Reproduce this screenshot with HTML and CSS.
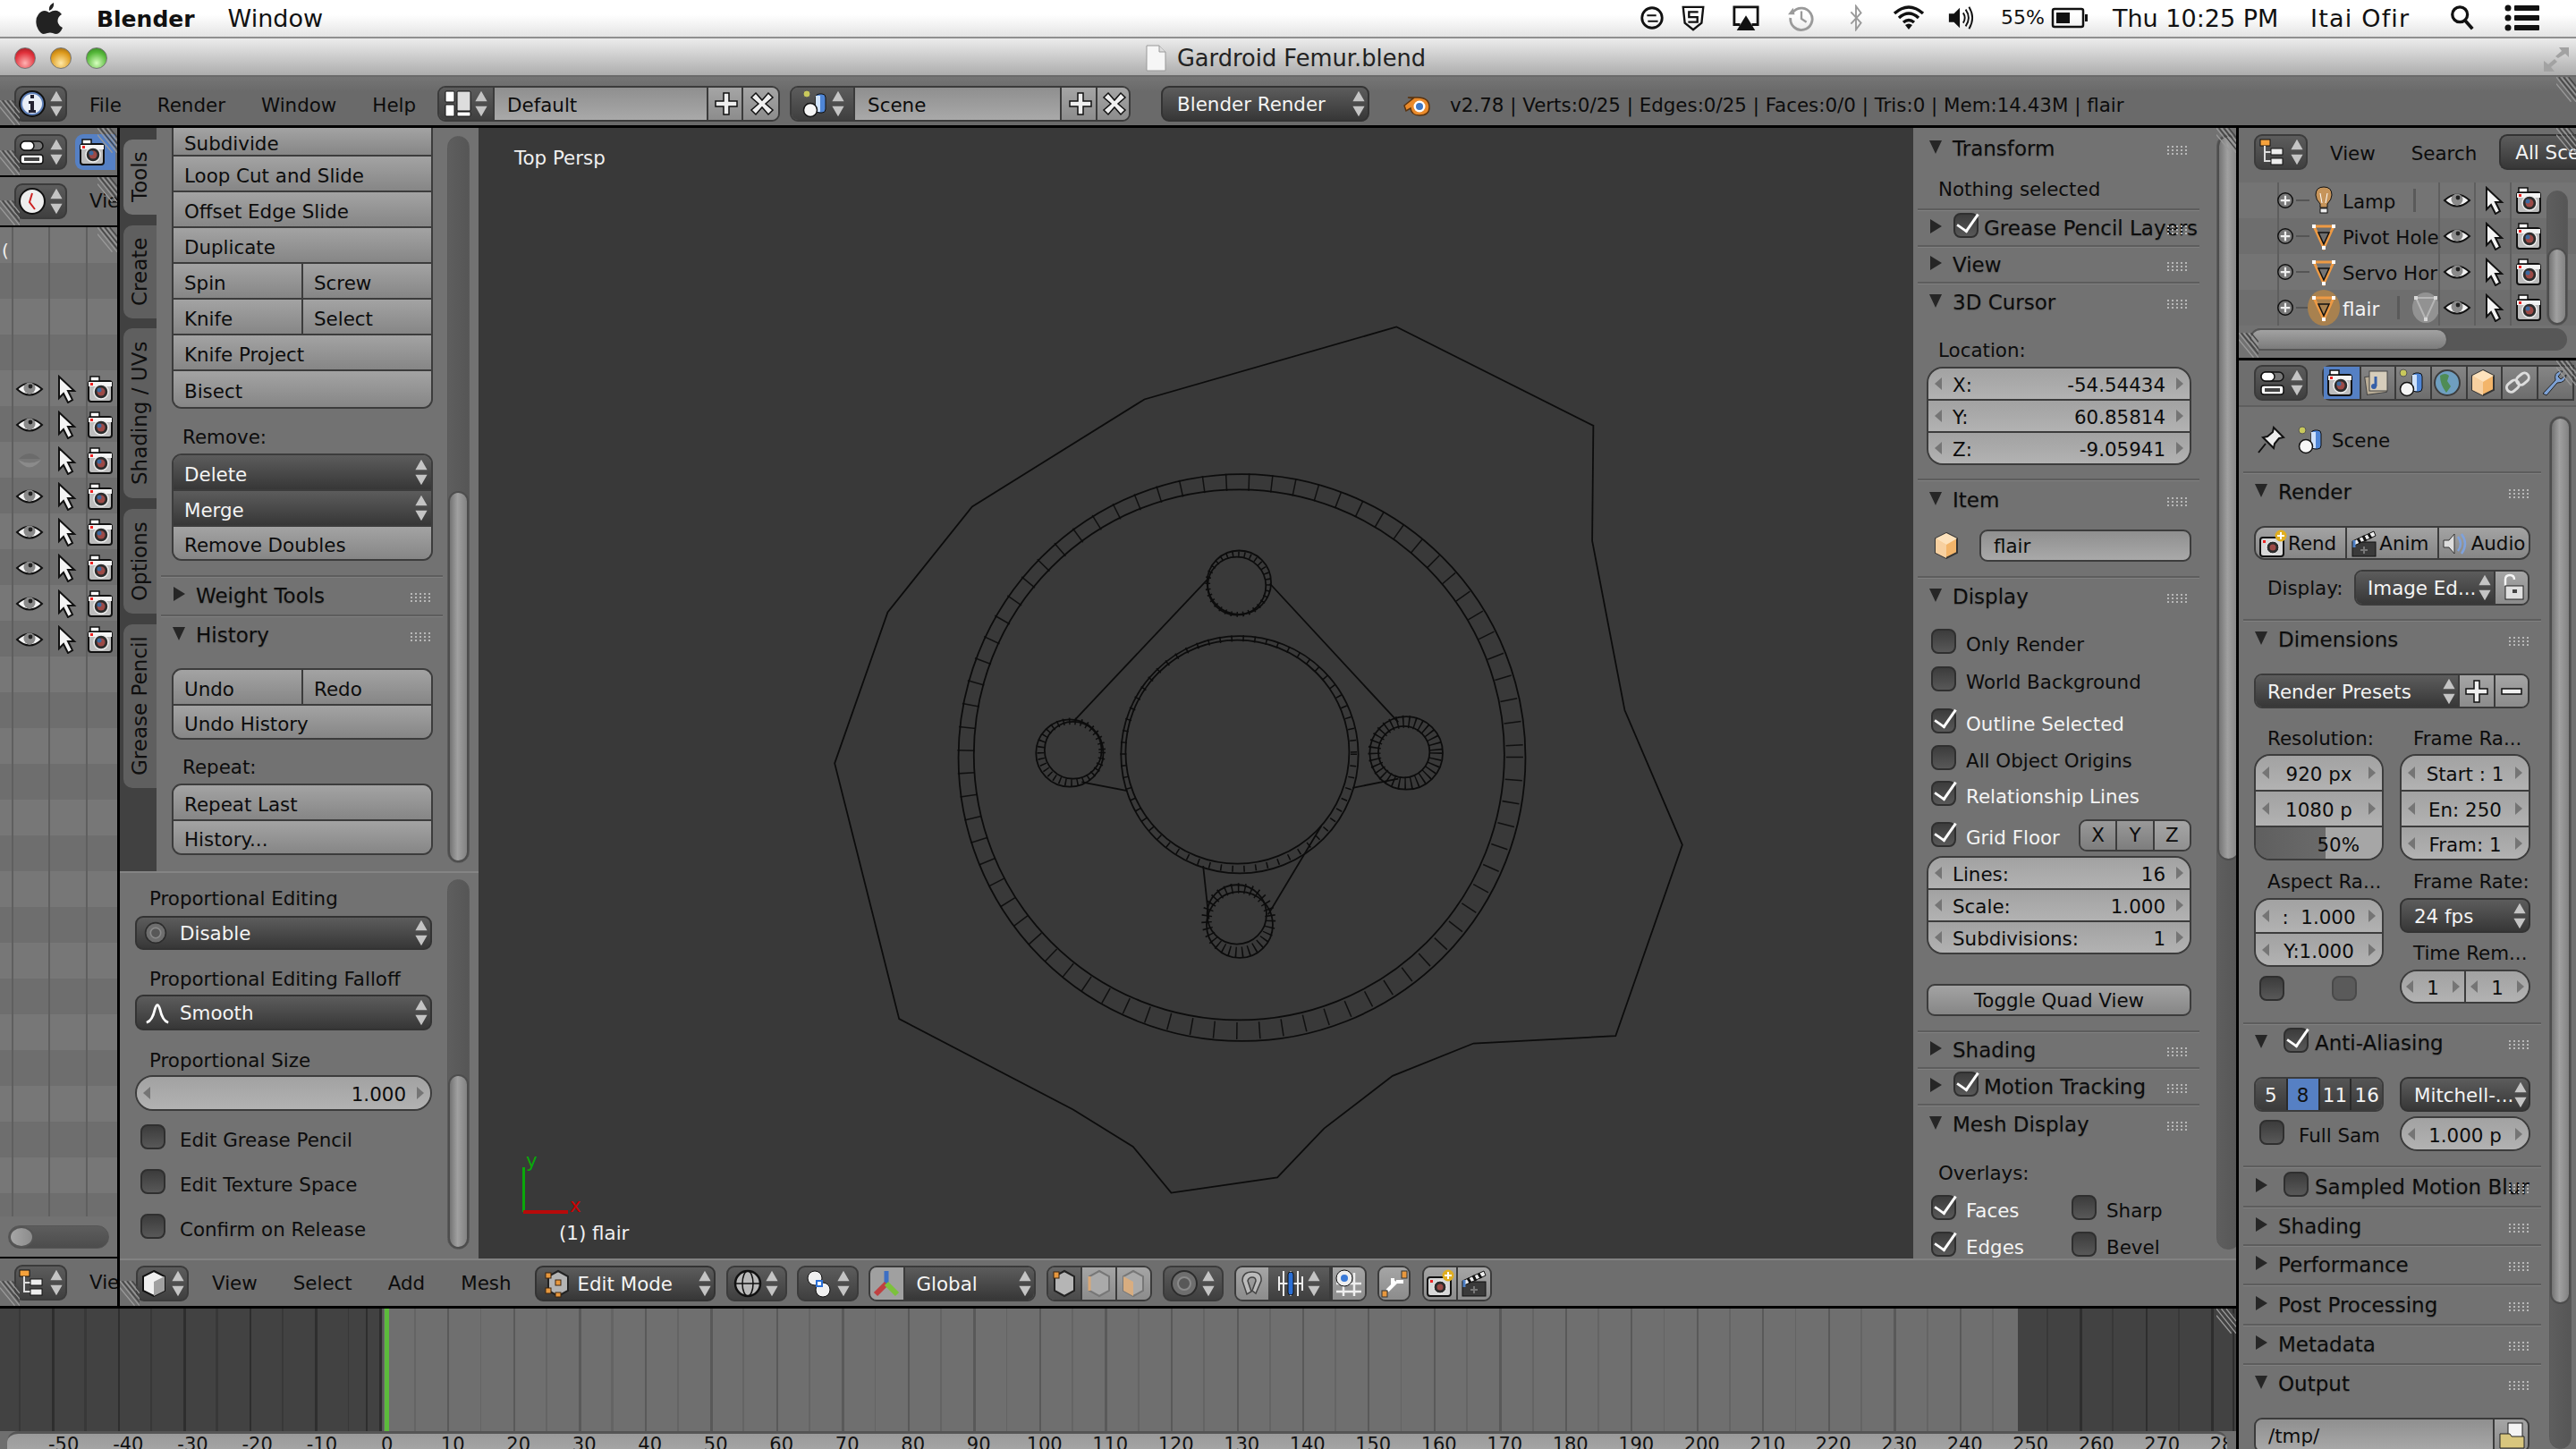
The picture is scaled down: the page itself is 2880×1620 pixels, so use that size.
FILE: index.html
```html
<!DOCTYPE html>
<html lang="en">
<head>
<meta charset="utf-8">
<title>Gardroid Femur.blend</title>
<link rel="stylesheet" href="styles.css">
</head>
<body>
<svg class="sprite" xmlns="http://www.w3.org/2000/svg">
<symbol id="eye" viewBox="0 0 32 32"><path d="M2 16Q16 3 30 16Q16 29 2 16Z" fill="#f2f2f2" stroke="#111" stroke-width="2"/><circle cx="16" cy="15" r="6.5" fill="#8a8a8a"/><circle cx="17" cy="13" r="2.4" fill="#222"/></symbol>
<symbol id="eyeoff" viewBox="0 0 32 32"><path d="M3 15Q16 32 29 15Q16 22 3 15Z" fill="#8b8b8b"/><path d="M4 14Q16 2 28 14" fill="#6b6b6b"/></symbol>
<symbol id="cursor" viewBox="0 0 32 32"><path d="M9 2V26L14 21L19 31L24 28L19 18H26Z" fill="#f4f4f4" stroke="#111" stroke-width="2"/></symbol>
<symbol id="cam" viewBox="0 0 32 32"><rect x="3" y="7" width="26" height="23" rx="3" fill="#bdbdbd" stroke="#111" stroke-width="2"/><rect x="5" y="2" width="10" height="5" fill="#fff" stroke="#111" stroke-width="1.5"/><rect x="3" y="8" width="26" height="5" fill="#f4f4f4"/><circle cx="17" cy="19" r="8" fill="#2c2c2c" stroke="#eee" stroke-width="1.5"/><circle cx="17" cy="19" r="4.5" fill="#9c4a46"/><circle cx="15" cy="17" r="2.5" fill="#3d6aa0"/><rect x="5" y="9" width="3" height="3" fill="#e22"/></symbol>
<symbol id="ud" viewBox="0 0 16 36"><path d="M8 3L1 15H15ZM1 21H15L8 33Z" fill="#c4c4c4"/></symbol>
<symbol id="info" viewBox="0 0 32 32"><circle cx="16" cy="16" r="14" fill="#5d7fb8" stroke="#111" stroke-width="2"/><circle cx="16" cy="16" r="11" fill="#e8eef8"/><rect x="14" y="6" width="4" height="4" fill="#223"/><path d="M12 13H18V23H20V26H12V23H14V16H12Z" fill="#223"/></symbol>
<symbol id="layout" viewBox="0 0 32 32"><rect x="2" y="2" width="10" height="12" rx="1" fill="#fff" stroke="#111"/><rect x="2" y="17" width="10" height="13" rx="1" fill="#fff" stroke="#111"/><rect x="15" y="2" width="15" height="22" rx="1" fill="#ddd" stroke="#111"/><rect x="15" y="25" width="15" height="5" rx="1" fill="#fff" stroke="#111"/></symbol>
<symbol id="scene" viewBox="0 0 32 32"><circle cx="7" cy="5" r="4" fill="#c8c85c" stroke="#555"/><rect x="17" y="5" width="11" height="21" rx="4" fill="#4f86d6" stroke="#111"/><rect x="17" y="7" width="5" height="18" fill="#cfe2fb"/><circle cx="11" cy="23" r="7.5" fill="#f6f6f6" stroke="#111" stroke-width="1.5"/></symbol>
<symbol id="plus" viewBox="0 0 32 32"><path d="M13 4H19V13H28V19H19V28H13V19H4V13H13Z" fill="#efefef" stroke="#111" stroke-width="1.5"/></symbol>
<symbol id="minus" viewBox="0 0 32 32"><rect x="5" y="13" width="22" height="6" fill="#efefef" stroke="#111" stroke-width="1.5"/></symbol>
<symbol id="cross" viewBox="0 0 32 32"><path d="M9 4L16 12L23 4L28 9L20 16L28 23L23 28L16 20L9 28L4 23L12 16L4 9Z" fill="#efefef" stroke="#111" stroke-width="1.5"/></symbol>
<symbol id="props" viewBox="0 0 32 32"><rect x="3" y="4" width="25" height="10" rx="5" fill="#777" stroke="#111" stroke-width="1.5"/><rect x="3" y="4" width="15" height="10" rx="5" fill="#fff" stroke="#111" stroke-width="1.5"/><rect x="3" y="19" width="25" height="10" rx="3" fill="#fff" stroke="#111" stroke-width="1.5"/><rect x="7" y="22" width="17" height="4" fill="#444"/></symbol>
<symbol id="clock" viewBox="0 0 32 32"><circle cx="16" cy="16" r="14" fill="#eee" stroke="#111" stroke-width="2"/><path d="M16 7L13 17L19 25" fill="none" stroke="#c22" stroke-width="2"/></symbol>
<symbol id="tree" viewBox="0 0 32 32"><rect x="2" y="2" width="11" height="7" fill="#f6a23c" stroke="#111"/><path d="M7 9V26H14M7 16H14" stroke="#ddd" stroke-width="2" fill="none"/><rect x="14" y="12" width="13" height="7" fill="#eee" stroke="#111"/><rect x="14" y="23" width="13" height="7" fill="#eee" stroke="#111"/></symbol>
<symbol id="cube" viewBox="0 0 32 32"><path d="M16 2L28 8V24L16 30L4 24V8Z" fill="#f0f0f0" stroke="#111" stroke-width="2"/><path d="M16 14L28 8V24L16 30Z" fill="#a0a0a0"/></symbol>
<symbol id="ocube" viewBox="0 0 32 32"><path d="M16 2L28 8V24L16 30L4 24V8Z" fill="#f3b56a" stroke="#333" stroke-width="2"/><path d="M16 15L4 8V24L16 30Z" fill="#f7d0a0"/><path d="M16 15L28 8L16 2L4 8Z" fill="#fde2bc"/></symbol>
<symbol id="blogo" viewBox="0 0 32 32"><path d="M2 18L12 10L6 9H17Q30 9 30 20Q30 29 19 29Q10 29 9 21L4 24Z" fill="#ea8a2a" stroke="#5a3410" stroke-width="1.5"/><circle cx="19" cy="19" r="6.5" fill="#fff"/><circle cx="19" cy="19" r="4" fill="#3f78c4"/></symbol>
<symbol id="editm" viewBox="0 0 32 32"><path d="M16 2L27 8V24L16 30L5 24V8Z" fill="#b4b4b4" stroke="#222" stroke-width="2"/><g fill="#e8983e" stroke="#3a2510"><rect x="2" y="4" width="6" height="6"/><rect x="13" y="12" width="6" height="6"/><rect x="2" y="21" width="6" height="6"/><rect x="13" y="26" width="6" height="5"/></g></symbol>
<symbol id="sphere" viewBox="0 0 32 32"><circle cx="16" cy="16" r="14" fill="#bbb" stroke="#111" stroke-width="2.5"/><ellipse cx="16" cy="16" rx="6" ry="14" fill="none" stroke="#111" stroke-width="1.5"/><path d="M2 16H30" stroke="#111" stroke-width="1.5"/></symbol>
<symbol id="pivot" viewBox="0 0 32 32"><circle cx="11" cy="10" r="8" fill="#f0f0f0" stroke="#111"/><circle cx="20" cy="23" r="8" fill="#f0f0f0" stroke="#111"/><rect x="13" y="13" width="6" height="6" fill="#fff" stroke="#2a6fd6" stroke-width="2"/></symbol>
<symbol id="manip" viewBox="0 0 32 32"><path d="M16 16V2" stroke="#3c6fc4" stroke-width="5"/><path d="M16 16L4 28" stroke="#c04040" stroke-width="6"/><path d="M16 16L28 28" stroke="#7cc13c" stroke-width="6"/></symbol>
<symbol id="vert" viewBox="0 0 32 32"><path d="M16 2L27 8V24L16 30L5 24V8Z" fill="#b5b5b5" stroke="#222" stroke-width="2"/><rect x="4" y="3" width="6" height="7" fill="#e8983e" stroke="#3a2510"/></symbol>
<symbol id="edge" viewBox="0 0 32 32"><path d="M16 2L27 8V24L16 30L5 24V8Z" fill="#aaa" stroke="#777" stroke-width="2"/><path d="M5 8V24" stroke="#d8a878" stroke-width="3"/></symbol>
<symbol id="face" viewBox="0 0 32 32"><path d="M16 2L27 8V24L16 30L5 24V8Z" fill="#aaa" stroke="#777" stroke-width="2"/><path d="M16 14L5 8V24L16 30Z" fill="#d8ad80"/></symbol>
<symbol id="disc" viewBox="0 0 32 32"><circle cx="16" cy="16" r="14" fill="#6e6e6e" stroke="#2c2c2c" stroke-width="2"/><circle cx="16" cy="16" r="7" fill="#585858" stroke="#8a8a8a" stroke-width="2"/></symbol>
<symbol id="smooth" viewBox="0 0 32 32"><path d="M3 28Q10 26 13 12Q16 2 19 12Q22 26 29 28" fill="none" stroke="#fff" stroke-width="3"/></symbol>
<symbol id="magnet" viewBox="0 0 32 32"><path d="M10 28L5 13Q5 3 16 3Q27 3 26 13L20 27L16 24L20 13Q20 9 16 9Q12 9 11 13L15 25Z" fill="#bbb" stroke="#444" stroke-width="1.5"/></symbol>
<symbol id="snap" viewBox="0 0 32 32"><path d="M3 8V24M8 2V30M3 16H29M16 2V30M24 2V30M29 8V24" stroke="#eee" stroke-width="2" fill="none"/><rect x="13" y="3" width="6" height="26" rx="3" fill="#2a6fd6" stroke="#111"/></symbol>
<symbol id="grid" viewBox="0 0 32 32"><path d="M22 4V30M30 16H2M30 25H2M10 16V30" stroke="#eee" stroke-width="2.5" fill="none"/><circle cx="11" cy="10" r="9" fill="#eee" stroke="#111"/><circle cx="11" cy="10" r="4" fill="#3a7ad8"/></symbol>
<symbol id="snapt" viewBox="0 0 32 32"><path d="M18 14L8 24M14 18V10M18 14H26" stroke="#fff" stroke-width="4" fill="none"/><rect x="24" y="2" width="6" height="8" fill="#e8983e" stroke="#333"/><rect x="2" y="24" width="6" height="7" fill="#e8983e" stroke="#333"/></symbol>
<symbol id="rcam" viewBox="0 0 32 32"><rect x="2" y="9" width="26" height="21" rx="3" fill="#d8d8d8" stroke="#111" stroke-width="2"/><circle cx="16" cy="20" r="7" fill="#2c2c2c" stroke="#fff"/><circle cx="16" cy="20" r="3.5" fill="#9c4a46"/><circle cx="25" cy="7" r="6.5" fill="#e0ae1f"/><path d="M25 3V11M21 7H29" stroke="#fff" stroke-width="2"/><rect x="5" y="12" width="3" height="3" fill="#e22"/></symbol>
<symbol id="clap" viewBox="0 0 32 32"><rect x="3" y="14" width="26" height="16" fill="#3a3a3a" stroke="#111"/><path d="M3 13L27 2L29 7L5 18Z" fill="#eee" stroke="#111"/><path d="M9 10L12 15M15 7L18 13M21 5L24 10" stroke="#111" stroke-width="3"/><path d="M5 12V20" stroke="#4d80c8" stroke-width="3"/><path d="M16 19V27M12 23H20" stroke="#777" stroke-width="2"/></symbol>
<symbol id="audio" viewBox="0 0 32 32"><path d="M2 12H8L14 5V27L8 20H2Z" fill="#ddd" stroke="#333"/><path d="M18 8Q24 16 18 24M22 5Q30 16 22 27" fill="none" stroke="#7fa2dc" stroke-width="2.5"/></symbol>
<symbol id="lock" viewBox="0 0 32 32"><path d="M9 14V7Q9 2 14 2Q19 2 19 7" fill="none" stroke="#f4f4f4" stroke-width="2.5"/><rect x="9" y="14" width="20" height="15" fill="#e0e0e0" stroke="#222"/><rect x="17" y="18" width="5" height="4" fill="#444"/></symbol>
<symbol id="pin" viewBox="0 0 32 32"><path d="M19 2L30 13L25 14L20 20L19 25L7 13L12 12L18 7ZM10 20L2 30" fill="#eee" stroke="#111" stroke-width="2"/></symbol>
<symbol id="bulb" viewBox="0 0 32 32"><path d="M16 1Q7 1 7 10Q7 15 12 20V24H20V20Q25 15 25 10Q25 1 16 1Z" fill="#c6945a" stroke="#111"/><rect x="12" y="25" width="8" height="5" fill="#eee" stroke="#111"/><path d="M14 19L12 8M18 19L20 8" stroke="#fff"/></symbol>
<symbol id="mesh" viewBox="0 0 32 32"><path d="M5 5H27L16 29Z" fill="none" stroke="#ee9a44" stroke-width="3"/><g fill="#fff"><rect x="3" y="3" width="4" height="4"/><rect x="25" y="3" width="4" height="4"/><rect x="14" y="27" width="4" height="4"/></g><path d="M10 12H22L16 25Z" fill="none" stroke="#111" stroke-width="1.5"/></symbol>
<symbol id="gmesh" viewBox="0 0 32 32"><path d="M5 5H27L16 29Z" fill="none" stroke="#b5b5b5" stroke-width="2"/><g fill="#d8d8d8"><rect x="3" y="3" width="4" height="4"/><rect x="25" y="3" width="4" height="4"/><rect x="14" y="27" width="4" height="4"/></g></symbol>
<symbol id="expand" viewBox="0 0 32 32"><circle cx="16" cy="16" r="11" fill="#777" stroke="#111" stroke-width="2"/><path d="M16 9V23M9 16H23" stroke="#eee" stroke-width="3"/></symbol>
<symbol id="layers" viewBox="0 0 32 32"><rect x="4" y="8" width="22" height="20" fill="#b9ad96" stroke="#444" transform="rotate(-8 15 18)"/><rect x="8" y="3" width="20" height="22" fill="#d6cdbb" stroke="#444"/><path d="M15 9V20" stroke="#355fa8" stroke-width="3"/><circle cx="13" cy="20" r="3" fill="#355fa8"/></symbol>
<symbol id="world" viewBox="0 0 32 32"><circle cx="16" cy="16" r="14" fill="#6f9fc0" stroke="#3c3c3c" stroke-width="2"/><path d="M8 8Q14 4 18 8L16 14L20 20L15 27Q8 18 8 8Z" fill="#4f8c55"/></symbol>
<symbol id="link" viewBox="0 0 32 32"><g fill="none" stroke="#ddd" stroke-width="3"><rect x="3" y="15" width="15" height="10" rx="5" transform="rotate(-40 10 20)"/><rect x="14" y="7" width="15" height="10" rx="5" transform="rotate(-40 21 12)"/></g></symbol>
<symbol id="wrench" viewBox="0 0 32 32"><path d="M4 28L18 13Q16 5 23 3L26 3L21 9L24 12L30 7Q30 16 20 16L8 30Z" fill="#7ea2d6" stroke="#222"/></symbol>
<symbol id="folder" viewBox="0 0 32 32"><rect x="12" y="2" width="16" height="17" fill="#f4f4f4" stroke="#222"/><path d="M3 14H14L16 17H30V30H3Z" fill="#d8c67e" stroke="#222"/></symbol>
<symbol id="triD" viewBox="0 0 16 18"><path d="M1 2H15L8 17Z" fill="#262626"/></symbol>
<symbol id="triR" viewBox="0 0 16 18"><path d="M2 1V17L15 9Z" fill="#262626"/></symbol>
<symbol id="grip" viewBox="0 0 24 10"><g fill="#b8b8b8"><rect x="0" y="0" width="2" height="2"/><rect x="5" y="0" width="2" height="2"/><rect x="10" y="0" width="2" height="2"/><rect x="15" y="0" width="2" height="2"/><rect x="20" y="0" width="2" height="2"/><rect x="0" y="4" width="2" height="2"/><rect x="5" y="4" width="2" height="2"/><rect x="10" y="4" width="2" height="2"/><rect x="15" y="4" width="2" height="2"/><rect x="20" y="4" width="2" height="2"/><rect x="0" y="8" width="2" height="2"/><rect x="5" y="8" width="2" height="2"/><rect x="10" y="8" width="2" height="2"/><rect x="15" y="8" width="2" height="2"/><rect x="20" y="8" width="2" height="2"/></g></symbol>
<symbol id="hatch" viewBox="0 0 24 30"><path d="M0 0L24 30M6 0L24 22M12 0L24 15M0 8L18 30" stroke="#999" stroke-width="1.5"/><path d="M3 0L24 26M9 0L24 19M15 0L24 11" stroke="#444" stroke-width="1.5"/></symbol>
<symbol id="apple" viewBox="0 0 30 36"><path d="M20 0Q21 6 15 9Q14 3 20 0ZM15 11Q20 8 24 9Q27 10 29 13Q23 17 25 23Q26 26 30 28Q27 35 23 35Q21 35 19 34Q16 33 13 34Q10 35 8 35Q4 34 1 26Q-1 18 3 13Q6 9 10 9Q12 9 15 11Z" fill="#222"/></symbol>
<symbol id="sync" viewBox="0 0 32 32"><circle cx="16" cy="16" r="12" fill="none" stroke="#111" stroke-width="3"/><path d="M11 9H23V14H11ZM9 18H21V23H9Z" fill="#fff"/><path d="M10 13H21M11 20H23" stroke="#111" stroke-width="2"/></symbol>
<symbol id="shield" viewBox="0 0 32 32"><path d="M4 3H28L26 22L16 30L6 22Z" fill="none" stroke="#111" stroke-width="2.5"/><path d="M22 9H11V15H21V21H10" fill="none" stroke="#111" stroke-width="2.5"/></symbol>
<symbol id="airplay" viewBox="0 0 32 32"><path d="M9 24H2V3H30V24H23" fill="none" stroke="#111" stroke-width="3"/><path d="M16 13L27 31H5Z" fill="#111"/></symbol>
<symbol id="time" viewBox="0 0 32 32"><path d="M6 9A13 13 0 1 1 3 16" fill="none" stroke="#9a9a9a" stroke-width="3"/><path d="M0 12H8L6 4Z" fill="#9a9a9a"/><path d="M16 8V17L22 21" fill="none" stroke="#9a9a9a" stroke-width="2.5"/></symbol>
<symbol id="bt" viewBox="0 0 16 32"><path d="M2 9L14 22L8 30V2L14 10L2 23" fill="none" stroke="#9a9a9a" stroke-width="2"/></symbol>
<symbol id="wifi" viewBox="0 0 36 30"><path d="M2 10Q18 -4 34 10M7 15Q18 5 29 15M12 20Q18 15 24 20" fill="none" stroke="#111" stroke-width="3.5"/><path d="M18 28L14 23Q18 20 22 23Z" fill="#111"/></symbol>
<symbol id="vol" viewBox="0 0 32 32"><path d="M2 11H8L15 4V28L8 21H2Z" fill="#111"/><path d="M19 10Q23 16 19 22M22 6Q29 16 22 26M26 3Q34 16 26 29" fill="none" stroke="#111" stroke-width="2"/></symbol>
<symbol id="batt" viewBox="0 0 42 24"><rect x="2" y="2" width="34" height="20" rx="2" fill="none" stroke="#111" stroke-width="2.5"/><rect x="6" y="6" width="15" height="12" fill="#111"/><rect x="38" y="8" width="3" height="8" fill="#111"/></symbol>
<symbol id="search" viewBox="0 0 32 32"><circle cx="13" cy="12" r="9" fill="none" stroke="#111" stroke-width="3.5"/><path d="M19 19L28 29" stroke="#111" stroke-width="4"/></symbol>
<symbol id="list" viewBox="0 0 40 32"><g fill="#111"><circle cx="4" cy="5" r="3.5"/><circle cx="4" cy="16" r="3.5"/><circle cx="4" cy="27" r="3.5"/><rect x="11" y="2" width="28" height="6" rx="1"/><rect x="11" y="13" width="28" height="6" rx="1"/><rect x="11" y="24" width="28" height="6" rx="1"/></g></symbol>
<symbol id="doc" viewBox="0 0 24 30"><path d="M2 1H16L23 8V29H2Z" fill="#f6f6f6" stroke="#999"/><path d="M16 1V8H23" fill="#ddd" stroke="#999"/></symbol>
<symbol id="full" viewBox="0 0 30 30"><path d="M18 2H29V13L25 9L17 14L14 12L21 6ZM1 17L6 21L13 15L16 18L9 24L13 29H1Z" fill="#a2a2a2"/></symbol>
</svg>

<div class="app">
  <header class="macbar">
    <svg class="apple"><use href="#apple"/></svg>
    <span class="mac-b">Blender</span>
    <span class="mac-m">Window</span>
    <span class="mac-right">
      <svg class="mi"><use href="#sync"/></svg>
      <svg class="mi g1"><use href="#shield"/></svg>
      <svg class="mi g2"><use href="#airplay"/></svg>
      <svg class="mi g3"><use href="#time"/></svg>
      <svg class="mi-bt"><use href="#bt"/></svg>
      <svg class="mi-wifi"><use href="#wifi"/></svg>
      <svg class="mi g4"><use href="#vol"/></svg>
      <span class="mac-pct">55%</span>
      <svg class="mi-batt"><use href="#batt"/></svg>
      <span class="mac-clock">Thu 10:25 PM</span>
      <span class="mac-user">Itai Ofir</span>
      <svg class="mi-search"><use href="#search"/></svg>
      <svg class="mi-list"><use href="#list"/></svg>
    </span>
  </header>

  <div class="titlebar">
    <span class="lights"><i class="light red"></i><i class="light amber"></i><i class="light green"></i></span>
    <span class="title"><svg class="doc"><use href="#doc"/></svg>Gardroid Femur.blend</span>
    <svg class="full"><use href="#full"/></svg>
  </div>

  <div class="hdr infobar">
    <svg class="hatch h-bl"><use href="#hatch"/></svg>
    <svg class="hatch h-tr"><use href="#hatch"/></svg>
    <span class="hb w59"><svg class="i"><use href="#info"/></svg><svg class="ud"><use href="#ud"/></svg></span>
    <nav class="menu ml25"><span>File</span><span>Render</span><span>Window</span><span>Help</span></nav>
    <span class="combo ml24 w383">
      <span class="cico w62"><svg class="i"><use href="#layout"/></svg><svg class="ud"><use href="#ud"/></svg></span>
      <span class="cfld"><span>Default</span></span>
      <span class="cbtn w39"><svg class="i"><use href="#plus"/></svg></span>
      <span class="cbtn w41"><svg class="i"><use href="#cross"/></svg></span>
    </span>
    <span class="combo ml11 w381">
      <span class="cico w71"><svg class="i"><use href="#scene"/></svg><svg class="ud"><use href="#ud"/></svg></span>
      <span class="cfld"><span>Scene</span></span>
      <span class="cbtn w40"><svg class="i"><use href="#plus"/></svg></span>
      <span class="cbtn w37"><svg class="i"><use href="#cross"/></svg></span>
    </span>
    <span class="dd hd ml34 w233"><span class="ddt">Blender Render</span><svg class="ud"><use href="#ud"/></svg></span>
    <svg class="blogo"><use href="#blogo"/></svg>
    <span class="stats">v2.78 | Verts:0/25 | Edges:0/25 | Faces:0/0 | Tris:0 | Mem:14.43M | flair</span>
  </div>

  <div class="ws">
    <div class="main">
      <div class="upper">
        <div class="leftcol">
          <div class="hdr h53">
            <svg class="hatch h-bl"><use href="#hatch"/></svg>
            <svg class="hatch h-tr"><use href="#hatch"/></svg>
            <span class="hb w59"><svg class="i"><use href="#props"/></svg><svg class="ud"><use href="#ud"/></svg></span>
            <span class="camtab"><svg class="i"><use href="#cam"/></svg></span>
          </div>
          <div class="hdr h54">
            <svg class="hatch h-bl"><use href="#hatch"/></svg>
            <svg class="hatch h-tr"><use href="#hatch"/></svg>
            <span class="hb w59"><svg class="i"><use href="#clock"/></svg><svg class="ud"><use href="#ud"/></svg></span>
            <span class="clip ml25">View</span>
          </div>
          <div class="lout">
            <svg class="hatch h-tr"><use href="#hatch"/></svg>
            <span class="lout-mark">(</span>
            <div class="lrow"><svg class="i"><use href="#eye"/></svg><svg class="i"><use href="#cursor"/></svg><svg class="i"><use href="#cam"/></svg></div>
            <div class="lrow"><svg class="i"><use href="#eye"/></svg><svg class="i"><use href="#cursor"/></svg><svg class="i"><use href="#cam"/></svg></div>
            <div class="lrow"><svg class="i"><use href="#eyeoff"/></svg><svg class="i"><use href="#cursor"/></svg><svg class="i"><use href="#cam"/></svg></div>
            <div class="lrow"><svg class="i"><use href="#eye"/></svg><svg class="i"><use href="#cursor"/></svg><svg class="i"><use href="#cam"/></svg></div>
            <div class="lrow"><svg class="i"><use href="#eye"/></svg><svg class="i"><use href="#cursor"/></svg><svg class="i"><use href="#cam"/></svg></div>
            <div class="lrow"><svg class="i"><use href="#eye"/></svg><svg class="i"><use href="#cursor"/></svg><svg class="i"><use href="#cam"/></svg></div>
            <div class="lrow"><svg class="i"><use href="#eye"/></svg><svg class="i"><use href="#cursor"/></svg><svg class="i"><use href="#cam"/></svg></div>
            <div class="lrow"><svg class="i"><use href="#eye"/></svg><svg class="i"><use href="#cursor"/></svg><svg class="i"><use href="#cam"/></svg></div>
            <div class="lscroll"><i class="lthumb"></i></div>
          </div>
          <div class="hdr h53">
            <svg class="hatch h-bl"><use href="#hatch"/></svg>
            <span class="hb w59"><svg class="i"><use href="#tree"/></svg><svg class="ud"><use href="#ud"/></svg></span>
            <span class="clip ml25">View</span>
          </div>
        </div>

        <div class="view3d">
          <div class="viewbody">
            <div class="shelf">
              <div class="shelf-top">
                <div class="tabs">
                  <span class="tab tab-on t-tools">Tools</span>
                  <span class="tab t-create">Create</span>
                  <span class="tab t-shade">Shading / UVs</span>
                  <span class="tab t-opts">Options</span>
                  <span class="tab t-gp">Grease Pencil</span>
                </div>
                <div class="tools">
                  <div class="inset"><div class="stack clip-top">
                    <div class="r h30"><span class="tx">Subdivide</span></div>
                    <div class="r"><span class="tx">Loop Cut and Slide</span></div>
                    <div class="r"><span class="tx">Offset Edge Slide</span></div>
                    <div class="r"><span class="tx">Duplicate</span></div>
                    <div class="r split"><span class="tx half">Spin</span><span class="tx half">Screw</span></div>
                    <div class="r split"><span class="tx half">Knife</span><span class="tx half">Select</span></div>
                    <div class="r"><span class="tx">Knife Project</span></div>
                    <div class="r"><span class="tx">Bisect</span></div>
                  </div></div>
                  <div class="lb lbt t16">Remove:</div>
                  <div class="inset t4"><div class="stack">
                    <div class="r drk"><span class="tx">Delete</span><svg class="ud"><use href="#ud"/></svg></div>
                    <div class="r drk"><span class="tx">Merge</span><svg class="ud"><use href="#ud"/></svg></div>
                    <div class="r"><span class="tx">Remove Doubles</span></div>
                  </div></div>
                  <div class="ph h44 t16"><svg class="tri"><use href="#triR"/></svg><span class="ptx">Weight Tools</span><svg class="grip"><use href="#grip"/></svg></div>
                  <div class="ph h44"><svg class="tri"><use href="#triD"/></svg><span class="ptx">History</span><svg class="grip"><use href="#grip"/></svg></div>
                  <div class="inset t16"><div class="stack">
                    <div class="r split"><span class="tx half">Undo</span><span class="tx half">Redo</span></div>
                    <div class="r"><span class="tx">Undo History</span></div>
                  </div></div>
                  <div class="lb lbt t15">Repeat:</div>
                  <div class="inset t4"><div class="stack">
                    <div class="r"><span class="tx">Repeat Last</span></div>
                    <div class="r"><span class="tx">History...</span></div>
                  </div></div>
                </div>
                <div class="vs vs-a"><i class="thumb th-a"></i></div>
              </div>
              <div class="shelf-bot">
                <div class="ops">
                  <div class="lb lbo t13">Proportional Editing</div>
                  <div class="dd opd t5"><svg class="ic24"><use href="#disc"/></svg><span class="ddt">Disable</span><svg class="ud"><use href="#ud"/></svg></div>
                  <div class="lb lbo t17">Proportional Editing Falloff</div>
                  <div class="dd opd h40 t3"><svg class="ic30"><use href="#smooth"/></svg><span class="ddt">Smooth</span><svg class="ud"><use href="#ud"/></svg></div>
                  <div class="lb lbo t18">Proportional Size</div>
                  <div class="pill h40 t2"><span class="num"><span class="v">1.000</span></span></div>
                  <div class="ck t15"><i class="cb"></i><span>Edit Grease Pencil</span></div>
                  <div class="ck t20"><i class="cb"></i><span>Edit Texture Space</span></div>
                  <div class="ck t20"><i class="cb"></i><span>Confirm on Release</span></div>
                </div>
                <div class="vs vs-b"><i class="thumb th-b"></i></div>
              </div>
            </div>

            <div class="viewport">
              <span class="vp-title">Top Persp</span>
              <svg class="mesh" viewBox="0 0 1568 1568" aria-hidden="true">
                <g fill="none" stroke="#0c0c0c" stroke-width="2.8">
                  <path d="M1037 40L1382 213L1380 415L1437 712L1538 948L1421 1283L1172 1296L1030 1353L910 1445L828 1531L642 1558L575 1477L470 1412L165 1253L52 805L145 540L293 355L595 167Z"/>
                  <circle cx="766" cy="795" r="497"/>
                  <circle cx="761" cy="790" r="465"/>
                  <circle cx="763" cy="793" r="481" stroke-width="30" stroke-dasharray="2.4 37.6" stroke-opacity=".9"/>
                  <circle cx="762" cy="790" r="208"/>
                  <circle cx="758" cy="785" r="196"/>
                  <circle cx="760" cy="788" r="202" stroke-width="11" stroke-dasharray="2.4 18"/>
                  <circle cx="761" cy="488" r="56"/><circle cx="757" cy="494" r="51"/><circle cx="759" cy="491" r="53" stroke-width="9" stroke-dasharray="2.4 8"/>
                  <circle cx="464" cy="787" r="59"/><circle cx="470" cy="782" r="50"/><circle cx="467" cy="785" r="54" stroke-width="12" stroke-dasharray="2.4 8"/>
                  <circle cx="1054" cy="787" r="64"/><circle cx="1050" cy="785" r="45"/><circle cx="1052" cy="786" r="54" stroke-width="22" stroke-dasharray="2.4 8"/>
                  <circle cx="762" cy="1088" r="58"/><circle cx="757" cy="1070" r="52"/><circle cx="760" cy="1080" r="56" stroke-width="18" stroke-dasharray="2.4 9"/>
                  <path d="M710 478L472 730M815 490L1040 733M485 838L565 853M960 848L1040 832M698 985L708 1078M905 915L812 1070"/>
                </g>
              </svg>
              <span class="axis-y"></span><span class="axis-x"></span>
              <span class="axis-ly">y</span><span class="axis-lx">x</span>
              <span class="vp-name">(1) flair</span>
            </div>

            <div class="npanel">
              <svg class="hatch h-tr"><use href="#hatch"/></svg>
              <div class="ncontent">
                <div class="ph ph0 h46"><svg class="tri"><use href="#triD"/></svg><span class="ptx">Transform</span><svg class="grip"><use href="#grip"/></svg></div>
                <div class="lb lbn t7">Nothing selected</div>
                <div class="ph h41 t7"><svg class="tri"><use href="#triR"/></svg><i class="cb cbh on"></i><span class="ptx">Grease Pencil Layers</span><svg class="grip"><use href="#grip"/></svg></div>
                <div class="ph h41"><svg class="tri"><use href="#triR"/></svg><span class="ptx">View</span><svg class="grip"><use href="#grip"/></svg></div>
                <div class="ph h44"><svg class="tri"><use href="#triD"/></svg><span class="ptx">3D Cursor</span><svg class="grip"><use href="#grip"/></svg></div>
                <div class="lb lbn t17">Location:</div>
                <div class="nblock t4"><div class="stack num-stack">
                  <div class="num"><span class="k">X:</span><span class="v">-54.54434</span></div>
                  <div class="num"><span class="k">Y:</span><span class="v">60.85814</span></div>
                  <div class="num"><span class="k">Z:</span><span class="v">-9.05941</span></div>
                </div></div>
                <div class="ph h46 t15"><svg class="tri"><use href="#triD"/></svg><span class="ptx">Item</span><svg class="grip"><use href="#grip"/></svg></div>
                <div class="nblock row t11"><svg class="ocube"><use href="#ocube"/></svg><span class="fld h36 grow">flair</span></div>
                <div class="ph h44 t16"><svg class="tri"><use href="#triD"/></svg><span class="ptx">Display</span><svg class="grip"><use href="#grip"/></svg></div>
                <div class="ck ckn t15"><i class="cb"></i><span>Only Render</span></div>
                <div class="ck ckn t12"><i class="cb"></i><span>World Background</span></div>
                <div class="ck ckn lit t17"><i class="cb on"></i><span>Outline Selected</span></div>
                <div class="ck ckn t11"><i class="cb"></i><span>All Object Origins</span></div>
                <div class="ck ckn lit t10"><i class="cb on"></i><span>Relationship Lines</span></div>
                <div class="nblock row gridrow t13">
                  <div class="ck lit ck-grid"><i class="cb on"></i><span>Grid Floor</span></div>
                  <div class="stack tri-xyz"><span class="cellx">X</span><span class="cellx">Y</span><span class="cellx lt">Z</span></div>
                </div>
                <div class="nblock t5"><div class="stack num-stack">
                  <div class="num"><span class="k">Lines:</span><span class="v">16</span></div>
                  <div class="num"><span class="k">Scale:</span><span class="v">1.000</span></div>
                  <div class="num"><span class="k">Subdivisions:</span><span class="v">1</span></div>
                </div></div>
                <div class="nblock t33"><div class="btn1">Toggle Quad View</div></div>
                <div class="ph h41 t16"><svg class="tri"><use href="#triR"/></svg><span class="ptx">Shading</span><svg class="grip"><use href="#grip"/></svg></div>
                <div class="ph h41"><svg class="tri"><use href="#triR"/></svg><i class="cb cbh on"></i><span class="ptx">Motion Tracking</span><svg class="grip"><use href="#grip"/></svg></div>
                <div class="ph h44"><svg class="tri"><use href="#triD"/></svg><span class="ptx">Mesh Display</span><svg class="grip"><use href="#grip"/></svg></div>
                <div class="lb lbn t18">Overlays:</div>
                <div class="ck2 t10"><div class="ck ckn lit w157"><i class="cb on"></i><span>Faces</span></div><div class="ck ckn"><i class="cb"></i><span>Sharp</span></div></div>
                <div class="ck2 t11"><div class="ck ckn lit w157"><i class="cb on"></i><span>Edges</span></div><div class="ck ckn"><i class="cb"></i><span>Bevel</span></div></div>
              </div>
              <div class="vs vs-c"><i class="thumb th-c"></i></div>
            </div>
          </div>

          <div class="hdr h53 vhdr">
            <svg class="hatch h-bl"><use href="#hatch"/></svg>
            <span class="hb w59"><svg class="i"><use href="#cube"/></svg><svg class="ud"><use href="#ud"/></svg></span>
            <nav class="menu ml26"><span>View</span><span>Select</span><span>Add</span><span>Mesh</span></nav>
            <span class="dd hd ml26 w202"><svg class="i"><use href="#editm"/></svg><span class="ddt dd-tight">Edit Mode</span><svg class="ud"><use href="#ud"/></svg></span>
            <span class="hb w68 ml12"><svg class="i"><use href="#sphere"/></svg><svg class="ud"><use href="#ud"/></svg></span>
            <span class="hb w69 ml11"><svg class="i"><use href="#pivot"/></svg><svg class="ud"><use href="#ud"/></svg></span>
            <span class="combo ml11 w187">
              <span class="cico lite w39"><svg class="i"><use href="#manip"/></svg></span>
              <span class="dd inner grow"><span class="ddt">Global</span><svg class="ud"><use href="#ud"/></svg></span>
            </span>
            <span class="combo ml12 w118 seg3">
              <span class="cbtn cdark"><svg class="i"><use href="#vert"/></svg></span>
              <span class="cbtn"><svg class="i"><use href="#edge"/></svg></span>
              <span class="cbtn"><svg class="i"><use href="#face"/></svg></span>
            </span>
            <span class="hb w68 ml12"><svg class="i"><use href="#disc"/></svg><svg class="ud"><use href="#ud"/></svg></span>
            <span class="combo ml12 w148">
              <span class="cbtn"><svg class="i"><use href="#magnet"/></svg></span>
              <span class="cico w70"><svg class="i"><use href="#snap"/></svg><svg class="ud"><use href="#ud"/></svg></span>
              <span class="cbtn"><svg class="i"><use href="#grid"/></svg></span>
            </span>
            <span class="combo ml12 w37"><span class="cbtn"><svg class="i"><use href="#snapt"/></svg></span></span>
            <span class="combo ml13 w78">
              <span class="cbtn"><svg class="i"><use href="#rcam"/></svg></span>
              <span class="cbtn"><svg class="i"><use href="#clap"/></svg></span>
            </span>
          </div>
        </div>
      </div>

      <div class="timeline">
        <svg class="hatch h-tr"><use href="#hatch"/></svg>
        <div class="tl-body">
          <span class="tl-dark tl-l"></span>
          <span class="tl-light"><i class="playhead"></i></span>
          <span class="tl-dark tl-r"></span>
        </div>
        <div class="ruler">
          <span class="neg">-50</span><span class="neg">-40</span><span class="neg">-30</span><span class="neg">-20</span><span class="neg">-10</span><span>0</span><span>10</span><span>20</span><span>30</span><span>40</span><span>50</span><span>60</span><span>70</span><span>80</span><span>90</span><span>100</span><span>110</span><span>120</span><span>130</span><span>140</span><span>150</span><span>160</span><span>170</span><span>180</span><span>190</span><span>200</span><span>210</span><span>220</span><span>230</span><span>240</span><span>250</span><span>260</span><span>270</span><span>280</span>
        </div>
      </div>
    </div>

    <div class="right">
      <div class="hdr h54 rhdr">
        <svg class="hatch h-tr"><use href="#hatch"/></svg>
        <span class="hb w60"><svg class="i"><use href="#tree"/></svg><svg class="ud"><use href="#ud"/></svg></span>
        <nav class="menu ml25"><span>View</span><span>Search</span></nav>
        <span class="dd allsc"><span class="ddt">All Scenes</span></span>
      </div>
      <div class="outl">
        <div class="orow">
          <div class="oname"><svg class="ex"><use href="#expand"/></svg><i class="olink"></i><svg class="oic"><use href="#bulb"/></svg><span class="ot">Lamp</span><i class="obar"></i></div>
          <span class="ocol"><svg class="i"><use href="#eye"/></svg></span><span class="ocol"><svg class="i"><use href="#cursor"/></svg></span><span class="ocol"><svg class="i"><use href="#cam"/></svg></span>
        </div>
        <div class="orow">
          <div class="oname"><svg class="ex"><use href="#expand"/></svg><i class="olink"></i><svg class="oic"><use href="#mesh"/></svg><span class="ot">Pivot Hole</span></div>
          <span class="ocol"><svg class="i"><use href="#eye"/></svg></span><span class="ocol"><svg class="i"><use href="#cursor"/></svg></span><span class="ocol"><svg class="i"><use href="#cam"/></svg></span>
        </div>
        <div class="orow">
          <div class="oname"><svg class="ex"><use href="#expand"/></svg><i class="olink"></i><svg class="oic"><use href="#mesh"/></svg><span class="ot">Servo Horn</span></div>
          <span class="ocol"><svg class="i"><use href="#eye"/></svg></span><span class="ocol"><svg class="i"><use href="#cursor"/></svg></span><span class="ocol"><svg class="i"><use href="#cam"/></svg></span>
        </div>
        <div class="orow">
          <div class="oname"><svg class="ex"><use href="#expand"/></svg><i class="olink"></i><span class="oic-hl"><svg class="oic"><use href="#mesh"/></svg></span><span class="ot white">flair</span><i class="obar"></i><span class="oghost"><svg class="oic"><use href="#gmesh"/></svg></span></div>
          <span class="ocol"><svg class="i"><use href="#eye"/></svg></span><span class="ocol"><svg class="i"><use href="#cursor"/></svg></span><span class="ocol"><svg class="i"><use href="#cam"/></svg></span>
        </div>
        <div class="vs vs-o"><i class="thumb th-o"></i></div>
      </div>
      <div class="hs"><svg class="hatch h-bl"><use href="#hatch"/></svg><span class="hs-track"><i class="hs-thumb"></i></span></div>

      <div class="hdr h52 phdr">
        <svg class="hatch h-tr"><use href="#hatch"/></svg>
        <span class="hb w60"><svg class="i"><use href="#props"/></svg><svg class="ud"><use href="#ud"/></svg></span>
        <span class="ptabs">
          <span class="ptab on"><svg class="i"><use href="#cam"/></svg></span>
          <span class="ptab"><svg class="i"><use href="#layers"/></svg></span>
          <span class="ptab"><svg class="i"><use href="#scene"/></svg></span>
          <span class="ptab"><svg class="i"><use href="#world"/></svg></span>
          <span class="ptab"><svg class="i"><use href="#ocube"/></svg></span>
          <span class="ptab"><svg class="i"><use href="#link"/></svg></span>
          <span class="ptab"><svg class="i"><use href="#wrench"/></svg></span>
        </span>
      </div>
      <div class="propbody">
        <div class="pcontent">
          <div class="pinrow h70"><svg class="pin"><use href="#pin"/></svg><svg class="pscene"><use href="#scene"/></svg><span>Scene</span></div>
          <div class="ph h44"><svg class="tri"><use href="#triD"/></svg><span class="ptx">Render</span><svg class="grip"><use href="#grip"/></svg></div>
          <div class="pblock t17"><div class="stack row3 h38">
            <span class="ibtn"><svg class="i28"><use href="#rcam"/></svg>Rend</span>
            <span class="ibtn"><svg class="i28"><use href="#clap"/></svg>Anim</span>
            <span class="ibtn"><svg class="i28"><use href="#audio"/></svg>Audio</span>
          </div></div>
          <div class="pblock row t11"><span class="disp">Display:</span>
            <span class="combo w196"><span class="dd inner grow"><span class="ddt">Image Ed...</span><svg class="ud"><use href="#ud"/></svg></span><span class="cbtn w38"><svg class="i"><use href="#lock"/></svg></span></span>
          </div>
          <div class="ph h44 t15"><svg class="tri"><use href="#triD"/></svg><span class="ptx">Dimensions</span><svg class="grip"><use href="#grip"/></svg></div>
          <div class="pblock t17"><span class="combo w308 h39">
            <span class="dd inner grow"><span class="ddt">Render Presets</span><svg class="ud"><use href="#ud"/></svg></span>
            <span class="cbtn w40"><svg class="i"><use href="#plus"/></svg></span>
            <span class="cbtn w38"><svg class="i"><use href="#minus"/></svg></span>
          </span></div>
          <div class="pcols t3">
            <div class="pc">
              <div class="lb lbp t15">Resolution:</div>
              <div class="stack num-stack p3 t3">
                <div class="num c"><span class="v">920 px</span></div>
                <div class="num c"><span class="v">1080 p</span></div>
                <div class="num c pct"><span class="v">50%</span></div>
              </div>
              <div class="lb lbp t8">Aspect Ra...</div>
              <div class="stack num-stack p2 t4">
                <div class="num c"><span class="v">:&nbsp; 1.000</span></div>
                <div class="num c"><span class="v">Y:1.000</span></div>
              </div>
              <div class="cbrow t13"><i class="cb"></i><i class="cb dim"></i></div>
            </div>
            <div class="pc pc2">
              <div class="lb lbp t15">Frame Ra...</div>
              <div class="stack num-stack p3 t3">
                <div class="num c"><span class="v">Start : 1</span></div>
                <div class="num c"><span class="v">En: 250</span></div>
                <div class="num c"><span class="v">Fram: 1</span></div>
              </div>
              <div class="lb lbp t8">Frame Rate:</div>
              <div class="dd pdd t4"><span class="ddt">24 fps</span><svg class="ud"><use href="#ud"/></svg></div>
              <div class="lb lbp t7">Time Rem...</div>
              <div class="stack row2 t4"><div class="num c"><span class="v">1</span></div><div class="num c"><span class="v">1</span></div></div>
            </div>
          </div>
          <div class="ph h44 t21"><svg class="tri"><use href="#triD"/></svg><i class="cb cbh on"></i><span class="ptx">Anti-Aliasing</span><svg class="grip"><use href="#grip"/></svg></div>
          <div class="pcols t17">
            <div class="pc">
              <div class="stack aa h39"><span>5</span><span class="sel">8</span><span>11</span><span>16</span></div>
              <div class="ck ckfs t5"><i class="cb"></i><span>Full Sam</span></div>
            </div>
            <div class="pc pc2">
              <div class="dd pdd h39"><span class="ddt">Mitchell-...</span><svg class="ud"><use href="#ud"/></svg></div>
              <div class="pill h39 t5"><span class="num c"><span class="v">1.000 p</span></span></div>
            </div>
          </div>
          <div class="ph h45 t16"><svg class="tri"><use href="#triR"/></svg><i class="cb cbh"></i><span class="ptx">Sampled Motion Blur</span><svg class="grip"><use href="#grip"/></svg></div>
          <div class="ph h43"><svg class="tri"><use href="#triR"/></svg><span class="ptx">Shading</span><svg class="grip"><use href="#grip"/></svg></div>
          <div class="ph h44"><svg class="tri"><use href="#triR"/></svg><span class="ptx">Performance</span><svg class="grip"><use href="#grip"/></svg></div>
          <div class="ph h45"><svg class="tri"><use href="#triR"/></svg><span class="ptx">Post Processing</span><svg class="grip"><use href="#grip"/></svg></div>
          <div class="ph h44"><svg class="tri"><use href="#triR"/></svg><span class="ptx">Metadata</span><svg class="grip"><use href="#grip"/></svg></div>
          <div class="ph h44"><svg class="tri"><use href="#triD"/></svg><span class="ptx">Output</span><svg class="grip"><use href="#grip"/></svg></div>
          <div class="pblock t17"><span class="combo w308 h39"><span class="fld grow flat">/tmp/</span><span class="cbtn w39"><svg class="i"><use href="#folder"/></svg></span></span></div>
        </div>
        <div class="vs vs-p"><i class="thumb th-p"></i></div>
      </div>
    </div>
  </div>
</div>
</body>
</html>
```
FILE: styles.css
```css
* { box-sizing: border-box; }
html, body { margin: 0; padding: 0; }
body { width: 2880px; height: 1620px; overflow: hidden; background: #000; font: 21.4px/1.2 "DejaVu Sans", sans-serif; color: #0c0c0c; }
.sprite { position: absolute; width: 0; height: 0; overflow: hidden; }
.app { width: 2880px; height: 1620px; display: flex; flex-direction: column; }
svg { display: block; flex: none; }
i { display: block; font-style: normal; }

/* spacing helpers */
.t2 { margin-top: 2px; } .t3 { margin-top: 3px; } .t4 { margin-top: 4px; } .t5 { margin-top: 5px; }
.t7 { margin-top: 7px; } .t8 { margin-top: 8px; } .t10 { margin-top: 10px; } .t11 { margin-top: 11px; }
.t12 { margin-top: 12px; } .t13 { margin-top: 13px; } .t14 { margin-top: 14px; } .t15 { margin-top: 15px; }
.t16 { margin-top: 16px; } .t17 { margin-top: 17px; } .t18 { margin-top: 18px; } .t20 { margin-top: 20px; }
.t21 { margin-top: 21px; } .t33 { margin-top: 33px; }
.ml11 { margin-left: 11px; } .ml12 { margin-left: 12px; } .ml13 { margin-left: 13px; } .ml24 { margin-left: 24px; } .ml25 { margin-left: 25px; }
.ml26 { margin-left: 26px; } .ml27 { margin-left: 27px; } .ml34 { margin-left: 34px; }
.w37 { width: 37px; } .w38 { width: 38px; } .w39 { width: 39px; } .w40 { width: 40px; } .w41 { width: 41px; }
.w59 { width: 59px; } .w60 { width: 60px; } .w62 { width: 62px; } .w68 { width: 68px; } .w69 { width: 69px; } .w70 { width: 70px; } .w71 { width: 71px; }
.w78 { width: 78px; } .w118 { width: 118px; } .w148 { width: 148px; } .w157 { width: 157px; } .w187 { width: 187px; }
.w196 { width: 196px; } .w202 { width: 202px; } .w233 { width: 233px; } .w308 { width: 308px; } .w381 { width: 381px; } .w383 { width: 383px; }
.h30 { height: 30px !important; } .h36 { height: 36px !important; } .h38 { height: 38px !important; } .h39 { height: 39px !important; }
.h40 { height: 40px !important; } .h41 { height: 41px !important; } .h43 { height: 43px !important; } .h44 { height: 44px !important; }
.h45 { height: 45px !important; } .h46 { height: 46px !important; } .h52 { height: 52px !important; } .h53 { height: 53px !important; }
.h54 { height: 54px !important; } .h70 { height: 70px !important; }
.grow { flex: 1; min-width: 0; }

/* mac menu bar */
.macbar { height: 43px; flex: none; display: flex; align-items: center; padding-left: 40px; background: linear-gradient(#fff 40%, #e4e4e4); border-bottom: 2px solid #8f8f8f; font-size: 25px; color: #111; }
.apple { width: 30px; height: 36px; }
.mac-b { font-weight: bold; margin-left: 38px; font-size: 25px; padding-top: 2px; }
.mac-m { margin-left: 37px; font-size: 27px; padding-top: 2px; }
.mac-right { margin-left: auto; display: flex; align-items: center; padding-right: 40px; }
.mi { width: 30px; height: 30px; }
.g1 { margin-left: 16px; } .g2 { margin-left: 29px; } .g3 { margin-left: 32px; } .g4 { margin-left: 24px; }
.mi-bt { width: 16px; height: 30px; margin-left: 38px; }
.mi-wifi { width: 38px; height: 30px; margin-left: 32px; }
.mac-pct { font-size: 22px; margin-left: 30px; width: 56px; }
.mi-batt { width: 42px; height: 24px; }
.mac-clock { margin-left: 27px; font-size: 27px; width: 223px; white-space: nowrap; padding-top: 2px; }
.mac-user { font-size: 27px; letter-spacing: 1.2px; width: 153px; white-space: nowrap; padding-top: 2px; margin-left: -2px; }
.mi-search { width: 30px; height: 32px; margin-left: 2px; }
.mi-list { width: 40px; height: 32px; margin-left: 32px; }

/* title bar */
.titlebar { height: 43px; flex: none; display: flex; align-items: center; justify-content: center; position: relative; background: linear-gradient(#ececec, #adadad); border-bottom: 2px solid #6a6a6a; font-size: 25.7px; color: #222; }
.lights { position: absolute; left: 16px; top: 10px; display: flex; gap: 16px; }
.light { width: 24px; height: 24px; border-radius: 50%; border: 1px solid #777; }
.red { background: radial-gradient(circle at 50% 75%, #ffb3b3, #e0303a 60%, #8d1a20); }
.amber { background: radial-gradient(circle at 50% 75%, #ffe9a8, #dd9a1c 60%, #8f5d10); }
.green { background: radial-gradient(circle at 50% 75%, #d8ffc0, #56b83a 60%, #2e7a1e); }
.title { display: flex; align-items: center; gap: 12px; margin-left: -6px; padding-top: 3px; }
.doc { width: 24px; height: 30px; }
.full { position: absolute; right: 7px; top: 8px; width: 30px; height: 30px; }

/* headers */
.hdr { position: relative; flex: none; display: flex; align-items: center; background: #6e6e6e; padding-left: 18px; color: #0c0c0c; overflow: hidden; white-space: nowrap; }
.infobar { height: 57px; padding-left: 16px; padding-top: 6px; background: linear-gradient(#757575, #6a6a6a 30%); border-bottom: 3px solid #000; }
.infobar .menu, .infobar .cfld, .infobar .stats { padding-top: 4px; }
.infobar .cbtn { padding-left: 4px; }
.hb { height: 40px; flex: none; display: flex; align-items: center; justify-content: center; gap: 2px; padding: 0 3px; border: 2px solid #3b3b3b; border-radius: 9px; background: linear-gradient(#5c5c5c, #3f3f3f); }
.i { width: 32px; height: 32px; }
.ud { width: 16px; height: 34px; margin-left: 1px; }
.menu { display: flex; gap: 40px; }
.clip { overflow: hidden; }
.camtab { width: 45px; height: 40px; margin-left: 9px; background: #5580c4; border-radius: 9px 0 0 9px; padding: 4px 0 0 3px; flex: none; }
.combo { height: 40px; flex: none; display: flex; border: 2px solid #3b3b3b; border-radius: 9px; overflow: hidden; }
.cico { flex: none; display: flex; align-items: center; justify-content: center; gap: 1px; background: linear-gradient(#5c5c5c, #3f3f3f); border-right: 2px solid #3b3b3b; }
.cico.lite { background: #a0a0a0; }
.cfld { flex: 1; display: flex; align-items: center; padding-left: 14px; background: linear-gradient(#8f8f8f, #a9a9a9); }
.cbtn { flex: 1; display: flex; align-items: center; justify-content: center; background: linear-gradient(#a5a5a5, #8c8c8c); border-left: 2px solid #3b3b3b; padding: 0 1px; }
.cbtn:first-child { border-left: 0; }
.cbtn.w38, .cbtn.w39, .cbtn.w40, .cbtn.w37, .cbtn.w41 { flex: none; }
.cdark { background: linear-gradient(#666, #4a4a4a); }
.dd { display: flex; align-items: center; color: #f4f4f4; background: linear-gradient(#5c5c5c, #373737); border: 2px solid #333; border-radius: 9px; padding: 0 2px 0 16px; }
.dd .ud { margin-left: auto; }
.dd.inner { border: 0; border-radius: 0; padding-left: 13px; }
.hd { height: 40px; flex: none; }
.ddt { white-space: nowrap; padding-top: 2px; }
.dd-tight { margin-left: 6px; }
.w202.hd { padding-left: 8px; }
.blogo { width: 32px; height: 32px; margin-left: 37px; }
.stats { margin-left: 21px; color: #0c0c0c; }

/* hatch corner widgets */
.hatch { position: absolute; width: 22px; height: 28px; }
.h-bl { left: 0; bottom: 0; }
.h-tr { right: 0; top: 0; }

/* workspace */
.ws { flex: 1; display: flex; min-height: 0; background: #000; }
.main { width: 2500px; flex: none; display: flex; flex-direction: column; }
.upper { height: 1317px; flex: none; display: flex; gap: 3px; }
.leftcol { width: 131px; flex: none; display: flex; flex-direction: column; gap: 2px; }
.leftcol .hdr { padding-left: 16px; }
.lout { position: relative; flex: 1; min-height: 0; padding-top: 161px; display: flex; flex-direction: column; background-color: #727272; background-image: repeating-linear-gradient(#777 0 40px, #6e6e6e 40px 80px); background-size: 100% 1106px; background-repeat: no-repeat; overflow: hidden; }
.lout::before { content: ""; position: absolute; left: 13px; top: 0; width: 81px; height: 1106px; border-left: 2px solid #5f5f5f; border-right: 2px solid #5f5f5f; background: linear-gradient(#5f5f5f, #5f5f5f) 39px 0 / 2px 100% no-repeat; }
.lout-mark { position: absolute; left: 2px; top: 14px; color: #eee; font-size: 20px; }
.lrow { position: relative; height: 40px; flex: none; display: grid; grid-template-columns: 40px 40px 38px; padding-left: 13px; align-items: center; justify-items: center; }
.lscroll { margin: auto 9px 9px; height: 26px; flex: none; background: linear-gradient(#5d5d5d, #4c4c4c); border: 1px solid #555; border-radius: 13px; position: relative; }
.lthumb { width: 28px; height: 24px; border-radius: 50%; background: linear-gradient(90deg, #a6a6a6, #8c8c8c); border: 2px solid #555; }

.view3d { flex: 1; min-width: 0; display: flex; flex-direction: column; }
.viewbody { flex: 1; min-height: 0; display: flex; }
.vhdr { border-top: 2px solid #828282; }

/* tool shelf */
.shelf { width: 401px; flex: none; display: flex; flex-direction: column; }
.shelf-top { height: 831px; flex: none; display: flex; background: #727272; overflow: hidden; }
.tabs { width: 41px; flex: none; background: #414141; display: flex; flex-direction: column; align-items: flex-end; padding-top: 13px; }
.tab { width: 37px; display: flex; align-items: center; justify-content: center; writing-mode: vertical-rl; transform: rotate(180deg); background: #5f5f5f; border-radius: 0 10px 10px 0; font-size: 23px; color: #0e0e0e; flex: none; }
.tab-on { background: #727272; }
.t-tools { height: 84px; } .t-create { height: 104px; margin-top: 12px; }
.t-shade { height: 190px; margin-top: 11px; } .t-opts { height: 117px; margin-top: 12px; } .t-gp { height: 183px; margin-top: 12px; }
.tools { width: 325px; flex: none; padding: 0 5px; display: flex; flex-direction: column; }
.inset { margin-left: 12px; margin-right: 11px; }
.stack { border: 2px solid #3c3c3c; border-radius: 11px; overflow: hidden; display: flex; flex-direction: column; }
.clip-top { border-top: 0; border-radius: 0 0 11px 11px; }
.r { height: 38px; flex: none; box-sizing: content-box; display: flex; align-items: center; background: linear-gradient(#a3a3a3, #868686); border-bottom: 2px solid #3c3c3c; }
.r:last-child { border-bottom: 0; height: 36px; }
.clip-top .r:last-child { height: 40px; }
.tx { padding: 5px 0 0 12px; }
.split .half { flex: 1; height: 100%; display: flex; align-items: center; }
.split .half + .half { border-left: 2px solid #3c3c3c; }
.r.drk { background: linear-gradient(#5c5c5c, #373737); color: #f4f4f4; justify-content: space-between; padding-right: 3px; }
.lb { height: 30px; line-height: 31px; flex: none; white-space: nowrap; }
.lbt { padding-left: 24px; }
.lbo { padding-left: 16px; }
.lbn { padding-left: 23px; }
.ph { position: relative; flex: none; display: flex; align-items: center; border-top: 2px solid #5d5d5d; box-shadow: inset 0 1px 0 #808080; padding-left: 12px; font-size: 23px; }
.ph0 { border-top: 0; box-shadow: none; }
.ptx { margin-left: 11px; padding-top: 2px; text-shadow: 0 1px 1px rgba(0,0,0,.25); white-space: nowrap; }
.tri { width: 16px; height: 18px; margin-top: -4px; }
.grip { width: 24px; height: 10px; position: absolute; right: 12px; top: 50%; margin-top: -3px; }
.vs { flex: none; width: 25px; border-radius: 13px; background: linear-gradient(90deg, #5e5e5e, #565656); border: 1px solid #5a5a5a; display: flex; flex-direction: column; }
.thumb { width: 100%; border-radius: 13px; background: linear-gradient(90deg, #747474, #a0a0a0 45%, #828282); border: 2px solid #4d4d4d; }
.vs-a { margin: 9px 0; height: 813px; justify-content: flex-end; }
.th-a { height: 415px; }
.shelf-bot { flex: 1; min-height: 0; display: flex; background: #727272; border-top: 2px solid #848484; }
.ops { width: 366px; flex: none; padding-left: 17px; display: flex; flex-direction: column; }
.ops > * { width: 332px; }
.opd { height: 38px; flex: none; padding-left: 8px; }
.ic24 { width: 26px; height: 26px; margin-right: 14px; }
.ic30 { width: 30px; height: 30px; margin-right: 10px; }
.pill { flex: none; border: 2px solid #3c3c3c; border-radius: 20px; overflow: hidden; display: flex; }
.pill .num { flex: 1; height: 100%; border: 0; }
.num { display: flex; align-items: center; height: 37px; background: linear-gradient(#a2a2a2, #b2b2b2); padding: 0 7px; white-space: nowrap; flex: none; }
.num::before, .num::after { content: ""; flex: none; width: 0; height: 0; border-top: 7px solid transparent; border-bottom: 7px solid transparent; }
.num::before { border-right: 8px solid #757575; }
.num::after { border-left: 8px solid #757575; }
.num .k { margin-left: 12px; padding-top: 4px; }
.num .v { margin-left: auto; margin-right: 12px; padding-top: 4px; }
.num.c .v { margin: 0 auto; }
.ck { display: flex; align-items: center; gap: 16px; height: 30px; flex: none; white-space: nowrap; padding-left: 6px; }
.ck span { padding-top: 5px; }
.cb { position: relative; width: 28px; height: 28px; flex: none; border: 2px solid #2f2f2f; border-radius: 8px; background: linear-gradient(#3c3c3c, #585858); margin-top: -3px; }
.cb.dim { background: #5a5a5a; border-color: #4a4a4a; }
.cb.on::after { content: ""; position: absolute; left: 7px; top: -7px; width: 11px; height: 24px; border-right: 3px solid #fff; border-bottom: 3px solid #fff; transform: rotate(35deg) scaleY(.9); }
.cbh { margin-left: 12px; margin-right: -5px; margin-top: -6px; }
.vs-b { margin-top: 7px; height: 414px; justify-content: flex-end; }
.th-b { height: 195px; }

/* viewport */
.viewport { position: relative; flex: 1; min-width: 0; background: #393939; color: #f0f0f0; overflow: hidden; }
.vp-title { position: absolute; left: 40px; top: 21px; }
.mesh { position: absolute; left: 365px; top: 197px; width: 1000px; height: 1000px; }
.axis-y { position: absolute; left: 49px; top: 1162px; width: 3px; height: 50px; background: #0aa80a; }
.axis-x { position: absolute; left: 50px; top: 1210px; width: 50px; height: 4px; background: #b80a0a; }
.axis-ly { position: absolute; left: 53px; top: 1142px; color: #0aa80a; }
.axis-lx { position: absolute; left: 102px; top: 1192px; color: #c00; }
.vp-name { position: absolute; left: 90px; top: 1223px; }

/* N panel */
.npanel { position: relative; width: 361px; flex: none; display: flex; background: #727272; overflow: hidden; }
.ncontent { width: 328px; flex: none; padding-left: 5px; display: flex; flex-direction: column; }
.ncontent > * { width: 315px; }
.nblock { margin-left: 10px; width: 296px !important; flex: none; }
.row { display: flex; align-items: center; }
.ocube { width: 32px; height: 32px; margin: 0 21px 0 6px; }
.fld { display: flex; align-items: center; padding-left: 14px; padding-top: 2px; border: 2px solid #3c3c3c; border-radius: 9px; background: linear-gradient(#8f8f8f, #a9a9a9); }
.fld.flat { border: 0; border-radius: 0; }
.num-stack { border-radius: 18px; }
.num-stack .num { height: 36px; border-bottom: 2px solid #3c3c3c; }
.num-stack .num:last-child { border-bottom: 0; height: 34px; }
.ckn { padding-left: 15px; gap: 11px; }
.lit { color: #f4f4f4; }
.ck-grid { padding-left: 5px; width: 170px; gap: 11px; }
.gridrow { height: 36px; justify-content: space-between; }
.tri-xyz { flex-direction: row; width: 126px; height: 36px; border-radius: 9px; }
.cellx { flex: 1; display: flex; align-items: center; justify-content: center; background: linear-gradient(#999, #7d7d7d); border-left: 2px solid #3c3c3c; }
.cellx:first-child { border-left: 0; }
.cellx.lt { background: linear-gradient(#a5a5a5, #909090); }
.btn1 { height: 36px; padding-top: 2px; border: 2px solid #3c3c3c; border-radius: 9px; display: flex; align-items: center; justify-content: center; background: linear-gradient(#a3a3a3, #868686); }
.ck2 { display: flex; flex: none; height: 30px; }
.vs-c { width: 27px; margin: 7px 0 0 11px; height: 1247px; }
.th-c { height: 811px; }

/* timeline */
.timeline { position: relative; height: 157px; margin-top: 3px; flex: none; display: flex; flex-direction: column; background: #6f6f6f; overflow: hidden; }
.tl-body { height: 137px; flex: none; display: flex; }
.tl-dark { flex: none; background-color: #424242; background-image: repeating-linear-gradient(90deg, #2e2e2e 0 2px, transparent 2px 36px, #383838 36px 38px, transparent 38px 73.5px); }
.tl-l { width: 424px; background-position: -15px 0; }
.tl-r { width: 244px; background-position: -4px 0; }
.tl-light { flex: 1; position: relative; background-color: #6f6f6f; background-image: repeating-linear-gradient(90deg, #595959 0 2px, transparent 2px 36px, #646464 36px 38px, transparent 38px 73.5px); border-left: 3px solid #2d2d2d; }
.playhead { position: absolute; left: 3px; top: 0; bottom: 0; width: 5px; background: #5cbb3c; }
.ruler { flex: 1; display: flex; padding-left: 27px; background: linear-gradient(#9a9a9a, #a4a4a4); border-top: 3px solid #555; font-size: 21px; color: #111; margin: 0 10px 0 8px; border-radius: 12px 12px 0 0; overflow: hidden; }
.ruler span { width: 73.5px; flex: none; text-align: center; line-height: 24px; }
.ruler .neg { width: 72.2px; }

/* right column */
.right { width: 377px; margin-left: 3px; flex: none; display: flex; flex-direction: column; background: #727272; }
.rhdr { height: 61px !important; padding-left: 17px; align-items: flex-start; padding-top: 7px; }
.rhdr .menu { margin-top: 9px; }
.rhdr .hb { height: 40px; }
.allsc { height: 40px; margin-left: 25px; flex: none; width: 140px; padding-left: 16px; border-right: 0; border-radius: 9px 0 0 9px; }
.outl { position: relative; height: 160px; flex: none; background-image: repeating-linear-gradient(#747474 0 40px, #6e6e6e 40px 80px); overflow: hidden; }
.orow { height: 40px; display: flex; width: 343px; }
.oname { width: 223px; flex: none; display: flex; align-items: center; overflow: hidden; white-space: nowrap; padding-left: 40px; background: linear-gradient(#5e5e5e, #5e5e5e) 43px 0 / 2px 100% no-repeat; }
.ex { width: 24px; height: 24px; }
.olink { width: 15px; height: 2px; background: #555; flex: none; }
.oic { width: 32px; height: 32px; }
.oic-hl { width: 36px; height: 40px; flex: none; border-radius: 50%; margin: 0 -2px; background: #a8814f; display: flex; align-items: center; justify-content: center; }
.ot { margin-left: 5px; padding-top: 3px; flex: none; }
.white { color: #f4f4f4; }
.obar { width: 3px; height: 26px; background: #5a5a5a; margin-left: 20px; flex: none; }
.oghost { width: 30px; height: 34px; border-radius: 50%; margin-left: 14px; background: #929292; flex: none; display: flex; align-items: center; justify-content: center; }
.ocol { width: 40px; flex: none; display: flex; align-items: center; justify-content: center; border-left: 2px solid #5f5f5f; }
.vs-o { position: absolute; right: 9px; top: 9px; height: 151px; width: 24px; justify-content: flex-end; }
.th-o { height: 86px; }
.hs { position: relative; height: 36px; flex: none; padding: 3px 10px 0 12px; overflow: hidden; }
.hs-track { display: block; height: 25px; border-radius: 13px; background: #575757; }
.hs-thumb { width: 222px; height: 25px; border-radius: 13px; background: linear-gradient(#a2a2a2, #7b7b7b); border: 2px solid #555; }
.phdr { border-top: 3px solid #000; height: 55px !important; padding-left: 17px; border-bottom: 2px solid #5f5f5f; }
.ptabs { display: flex; margin-left: 16px; border: 2px solid #3b3b3b; border-radius: 9px 0 0 9px; height: 40px; flex: none; }
.ptab { width: 39.7px; flex: none; background: linear-gradient(#858585, #6d6d6d); display: flex; align-items: center; justify-content: center; padding-right: 4px; border-left: 2px solid #3b3b3b; }
.ptab:first-child { border-left: 0; }
.ptab.on { background: #5580c4; }
.propbody { flex: 1; min-height: 0; display: flex; overflow: hidden; }
.pcontent { width: 344px; flex: none; padding-left: 5px; display: flex; flex-direction: column; }
.pcontent > * { width: 333px; }
.pcontent .cbh { margin-left: 17px; margin-right: -4px; }
.pblock { margin-left: 12px; width: 309px !important; flex: none; }
.pinrow { display: flex; align-items: center; padding-left: 15px; flex: none; margin-top: 2px; }
.pin { width: 32px; height: 32px; }
.pscene { width: 32px; height: 32px; margin-left: 12px; }
.pinrow span { margin-left: 8px; padding-top: 2px; }
.row3 { flex-direction: row; border-radius: 12px; }
.ibtn { flex: 1; display: flex; align-items: center; background: linear-gradient(#a3a3a3, #868686); padding-left: 3px; padding-top: 1px; border-left: 2px solid #3c3c3c; white-space: nowrap; overflow: hidden; }
.ibtn:first-child { border-left: 0; }
.i28 { width: 32px; height: 32px; margin-right: 1px; }
.disp { width: 112px; padding-left: 15px; flex: none; padding-top: 2px; }
.pcols { display: flex; gap: 18px; padding-left: 12px; }
.pc { width: 145px; flex: none; display: flex; flex-direction: column; }
.pc2 { width: 146px; }
.lbp { padding-left: 15px; }
.p3 .num, .p2 .num { height: 40px; }
.p3 .num:last-child { height: 35px; }
.p2 .num:first-child { height: 38px; }
.p2 .num:last-child { height: 35px; }
.pct { background: linear-gradient(90deg, #5f5f5f, #6a6a6a 55%, #a6a6a6 55%); }
.pct::before, .pct::after { visibility: hidden; }
.num.pct .v { margin: 0 10px 0 auto; }
.cbrow { display: flex; gap: 53px; padding-left: 6px; height: 27px; }
.pdd { height: 39px; flex: none; padding-left: 14px; }
.row2 { flex-direction: row; height: 38px; border-radius: 19px; }
.row2 .num { flex: 1; height: 100%; padding: 0 5px; }
.row2 .num + .num { border-left: 2px solid #3c3c3c; }
.aa { flex-direction: row; border-radius: 9px; }
.aa span { flex: 1; display: flex; align-items: center; justify-content: center; padding-top: 2px; background: linear-gradient(#555, #3a3a3a); color: #f4f4f4; border-left: 2px solid #2a2a2a; }
.aa span:first-child { border-left: 0; }
.aa .sel { background: #5680c4; color: #111; }
.ckfs { gap: 16px; height: 39px; }
.vs-p { width: 25px; margin: 10px 0 0 3px; height: 1155px; }
.th-p { height: 992px; }
```
